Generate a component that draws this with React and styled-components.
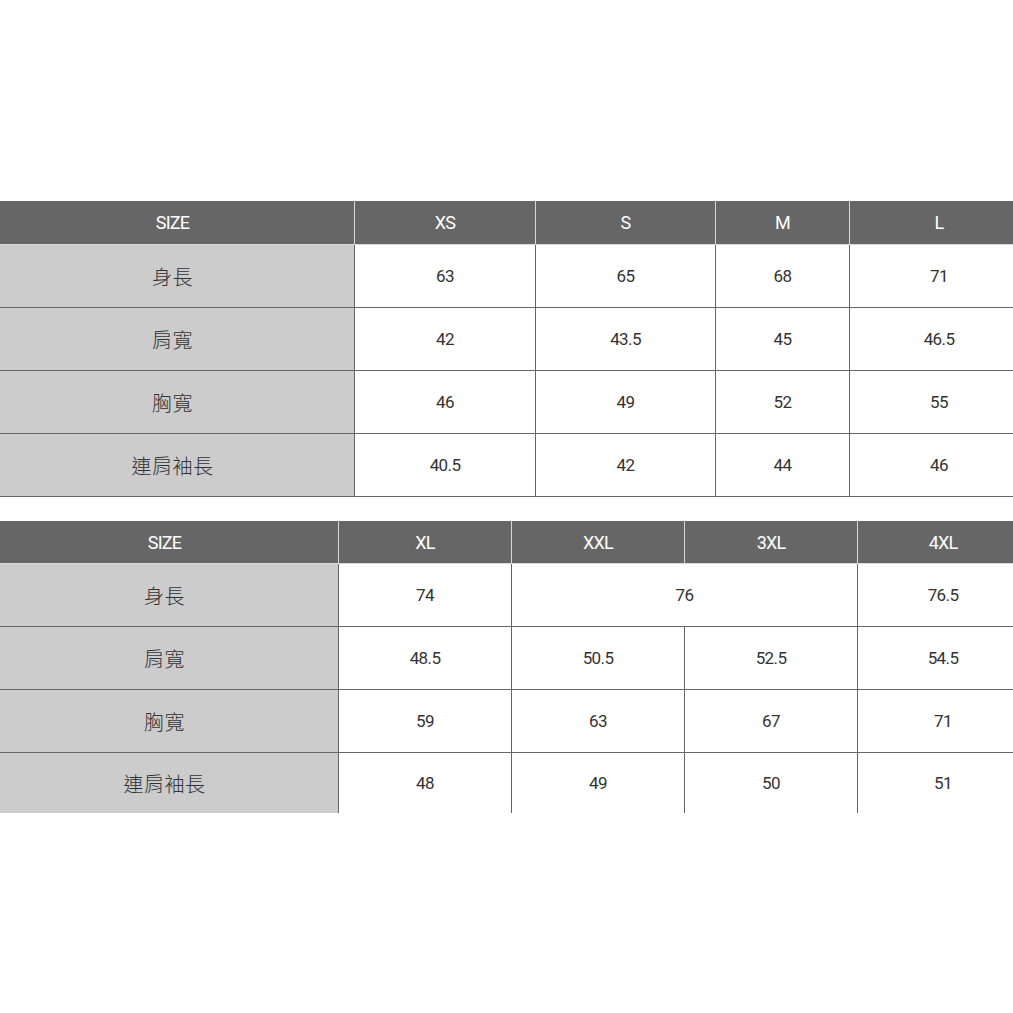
import React from "react";
import styled, { createGlobalStyle } from "styled-components";

const Global = createGlobalStyle`
  html, body { margin: 0; padding: 0; background: #ffffff; overflow: hidden; }
  body { font-family: Roboto, "Liberation Sans", "Noto Sans CJK TC", sans-serif; }
`;

const Page = styled.div`
  width: 1013px;
  overflow: hidden;
  padding-top: 201px;
  display: flex;
  flex-direction: column;
  gap: 24px;
`;

const Grid = styled.div`
  display: grid;
  grid-template-columns: ${(p) => p.$cols};
  width: max-content;
`;

const HeadCell = styled.div`
  height: ${(p) => p.$h}px;
  background: #666666;
  color: #ffffff;
  display: flex;
  align-items: center;
  justify-content: center;
  padding-right: ${(p) => (p.$first ? "9px" : "0")};
  font-family: Roboto, "Liberation Sans", sans-serif;
  font-size: 18px;
  letter-spacing: -0.8px;
  border-bottom: 1px solid #d8d8d8;
  border-right: ${(p) => (p.$last ? "none" : "1px solid #d8d8d8")};
`;

const LabelCell = styled.div`
  height: ${(p) => p.$h}px;
  background: #cccccc;
  color: #333333;
  display: flex;
  align-items: center;
  justify-content: center;
  padding-right: 9px;
  font-family: "Noto Sans CJK TC", "Noto Sans CJK SC", sans-serif;
  font-weight: 300;
  font-size: 20px;
  letter-spacing: 0.5px;
  border-right: 1px solid #666666;
  border-bottom: ${(p) => (p.$noBottom ? "none" : "1px solid #666666")};
`;

const ValueCell = styled.div`
  height: ${(p) => p.$h}px;
  grid-column: span ${(p) => p.$span || 1};
  background: #ffffff;
  color: #333333;
  display: flex;
  align-items: center;
  justify-content: center;
  font-family: Roboto, "Liberation Sans", sans-serif;
  font-size: 17px;
  letter-spacing: -0.6px;
  border-right: ${(p) => (p.$last ? "none" : "1px solid #666666")};
  border-bottom: ${(p) => (p.$noBottom ? "none" : "1px solid #666666")};
`;

const table1 = {
  cols: "355px 181px 180px 134px 178px",
  headH: 43,
  head: ["SIZE", "XS", "S", "M", "L"],
  rows: [
    ["身長", ["63"], ["65"], ["68"], ["71"]],
    ["肩寬", ["42"], ["43.5"], ["45"], ["46.5"]],
    ["胸寬", ["46"], ["49"], ["52"], ["55"]],
    ["連肩袖長", ["40.5"], ["42"], ["44"], ["46"]],
  ],
  lastH: 62,
  lastBorder: true,
};

const table2 = {
  cols: "339px 173px 173px 173px 170px",
  headH: 42,
  head: ["SIZE", "XL", "XXL", "3XL", "4XL"],
  rows: [
    ["身長", ["74"], ["76", 2], ["76.5"]],
    ["肩寬", ["48.5"], ["50.5"], ["52.5"], ["54.5"]],
    ["胸寬", ["59"], ["63"], ["67"], ["71"]],
    ["連肩袖長", ["48"], ["49"], ["50"], ["51"]],
  ],
  lastH: 60,
  lastBorder: false,
};

function SizeTable({ t }) {
  return (
    <Grid $cols={t.cols}>
      {t.head.map((h, i) => (
        <HeadCell
          key={h + i}
          $h={t.headH}
          $first={i === 0}
          $last={i === t.head.length - 1}
        >
          {h}
        </HeadCell>
      ))}
      {t.rows.map((row, ri) => {
        const isLast = ri === t.rows.length - 1;
        const h = isLast ? t.lastH : 62;
        const noBottom = isLast && !t.lastBorder;
        const [label, ...vals] = row;
        return (
          <React.Fragment key={ri}>
            <LabelCell $h={h} $noBottom={noBottom}>
              {label}
            </LabelCell>
            {vals.map(([v, span], vi) => (
              <ValueCell
                key={vi}
                $h={h}
                $span={span}
                $noBottom={noBottom}
                $last={vi === vals.length - 1}
              >
                {v}
              </ValueCell>
            ))}
          </React.Fragment>
        );
      })}
    </Grid>
  );
}

export default function App() {
  return (
    <>
      <Global />
      <Page>
        <SizeTable t={table1} />
        <SizeTable t={table2} />
      </Page>
    </>
  );
}
